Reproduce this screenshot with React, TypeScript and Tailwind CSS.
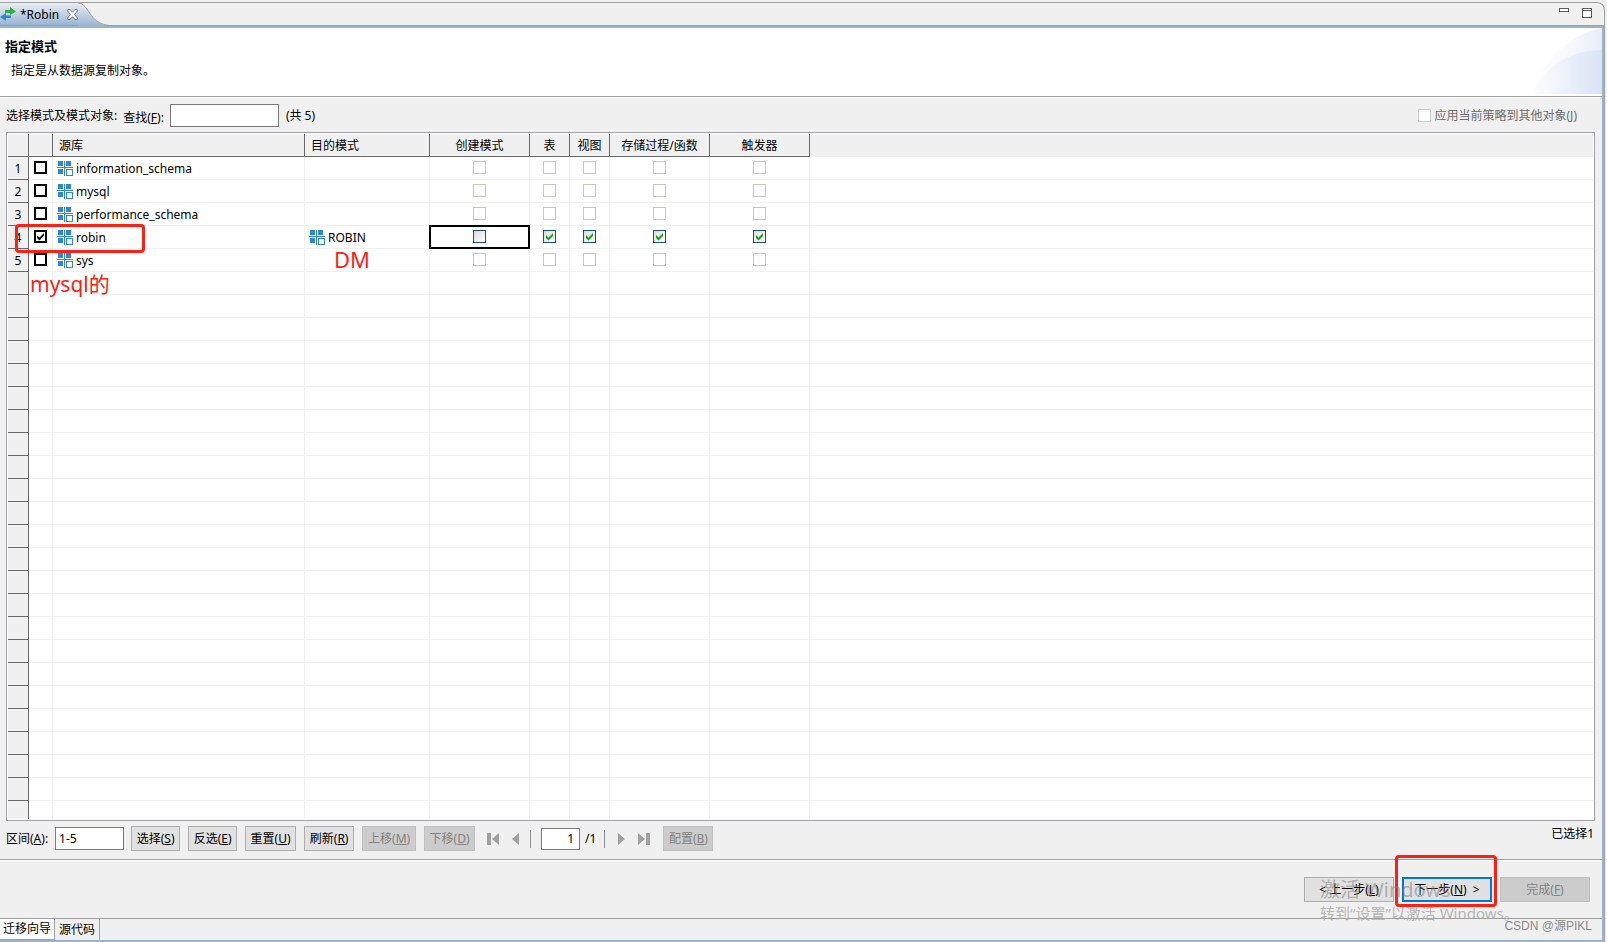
import { useState, type ReactNode } from "react";

type SchemaRow = {
  name: string;
  target?: string;
};

const schemas: SchemaRow[] = [
  { name: "information_schema" },
  { name: "mysql" },
  { name: "performance_schema" },
  { name: "robin", target: "ROBIN" },
  { name: "sys" },
];

const optionColumns = ["创建模式", "表", "视图", "存储过程/函数", "触发器"];
const emptyRows = Array.from({ length: 24 }, (_, i) => i);

function TransferIcon() {
  return (
    <svg width="16" height="14" viewBox="0 0 16 14" aria-hidden="true">
      <path d="M5 3h5V0l6 4.500L10 8V6H5z" fill="#2fae43" />
      <path d="M11 8.500H6V6L0 10l6 4v-3h5z" fill="#2f86d6" />
    </svg>
  );
}

function CloseIcon() {
  return (
    <svg width="11" height="11" viewBox="0 0 11 11" aria-hidden="true">
      <path
        d="M1 .5h2l2.500 2.700L8 .5h2l.5 1.500-3 3.500 3 3.500L10 10.500H8L5.500 7.800 3 10.500H1L.5 9l3-3.500-3-3.500z"
        fill="#fff"
        stroke="#6b6b6b"
      />
    </svg>
  );
}

function SchemaIcon() {
  return (
    <svg className="shrink-0" width="16" height="16" viewBox="0 0 16 16" shapeRendering="crispEdges" aria-hidden="true">
      <g fill="#2f86d6">
        <rect x="1" y="0" width="5" height="5" />
        <rect x="9" y="0" width="5" height="5" />
        <rect x="1" y="8" width="5" height="5" />
        <rect x="7" y="0" width="1" height="15" />
        <rect x="0" y="6" width="16" height="1" />
        <path d="M9 8h7v7H9zM10 9v5h5V9z" fillRule="evenodd" />
      </g>
    </svg>
  );
}

function RowCheck({ label, initial }: { label: string; initial: boolean }) {
  const [checked, setChecked] = useState(initial);
  return (
    <span className="mx-auto grid size-[13px]">
      <input
        type="checkbox"
        aria-label={label}
        checked={checked}
        onChange={() => setChecked(!checked)}
        className="size-[13px] appearance-none border-2 border-black bg-white [grid-area:1/1]"
      />
      {checked && (
        <svg className="pointer-events-none [grid-area:1/1]" width="13" height="13" viewBox="0 0 13 13" aria-hidden="true">
          <path d="M3 5.500v2.500l2.500 2.500L10 5.500V3L5.500 7.500z" fill="#000" />
        </svg>
      )}
    </span>
  );
}

function OptionCheck({ label, enabled, initial }: { label: string; enabled: boolean; initial: boolean }) {
  const [checked, setChecked] = useState(initial);
  return (
    <span className="mx-auto grid size-[13px]">
      <input
        type="checkbox"
        aria-label={label}
        checked={checked}
        disabled={!enabled}
        onChange={() => setChecked(!checked)}
        className="size-[13px] appearance-none border border-[#1c5180] bg-linear-to-br from-[#dcdcd7] to-white [grid-area:1/1] disabled:border-[#cac8bb] disabled:bg-white disabled:bg-none"
      />
      {checked && (
        <svg className="pointer-events-none [grid-area:1/1]" width="13" height="13" viewBox="0 0 13 13" aria-hidden="true">
          <path d="M3 5v3l2.500 2.500L10 6V3L5.500 7.500z" fill="#21a121" />
        </svg>
      )}
    </span>
  );
}

function ToolButton({ children, width, disabled }: { children: ReactNode; width: string; disabled?: boolean }) {
  return (
    <button
      type="button"
      disabled={disabled}
      className={`h-[25px] border border-[#adadad] bg-[#e1e1e1] whitespace-nowrap disabled:border-[#bfbfbf] disabled:bg-[#cccccc] disabled:text-[#838383] ${width}`}
    >
      {children}
    </button>
  );
}

function Rule() {
  return <div className="h-[2px] shrink-0 border-t border-[#a0a0a0] bg-white" />;
}

export default function App() {
  return (
    <div className="flex h-screen flex-col bg-[#f0f0f0] pt-[2px] pr-[2px] font-['Noto_Sans','Noto_Sans_CJK_SC',sans-serif] text-xs leading-4 text-black">
      <div className="flex min-h-0 flex-1 flex-col rounded-tr-lg border-t border-r border-[#a0a0a0]">
        <div className="flex h-[23px] shrink-0 items-stretch justify-between border-b border-[#a0a0a0]">
          <div className="flex">
            <div className="flex items-center bg-linear-to-b from-[#e8eef5] to-[#99b4d1]">
              <TransferIcon />
              <span className="ml-1 w-[47px] pt-px">*Robin</span>
              <button type="button" aria-label="关闭">
                <CloseIcon />
              </button>
            </div>
            <svg width="32" height="23" viewBox="0 0 32 23" aria-hidden="true">
              <defs>
                <linearGradient id="tabFill" x1="0" y1="0" x2="0" y2="1">
                  <stop offset="0" stopColor="#e8eef5" />
                  <stop offset="1" stopColor="#99b4d1" />
                </linearGradient>
              </defs>
              <path d="M0 0C12 1 10 20 31 23H0z" fill="url(#tabFill)" />
              <path d="M0 0C12 1 10 20 31 22.500" fill="none" stroke="#a0a0a0" />
            </svg>
          </div>
          <div className="flex items-start gap-[13px] pt-[5px] pr-3">
            <button type="button" aria-label="最小化">
              <svg width="10" height="4" viewBox="0 0 10 4" shapeRendering="crispEdges" aria-hidden="true">
                <path d="M0 0h10v4H0z" fill="#5a5a5a" />
                <path d="M1 1h8v2H1z" fill="#fff" />
              </svg>
            </button>
            <button type="button" aria-label="最大化">
              <svg width="10" height="10" viewBox="0 0 10 10" shapeRendering="crispEdges" aria-hidden="true">
                <path d="M0 0h10v10H0z" fill="#5a5a5a" />
                <path d="M1 1h8v1H1zM1 3h8v6H1z" fill="#fff" />
              </svg>
            </button>
          </div>
        </div>

        <div className="flex min-h-0 flex-1 flex-col border-t-2 border-r-2 border-b-2 border-[#99b4d1]">
          <header className="flex h-[68px] shrink-0 justify-between bg-white">
            <div className="pt-[10px] pl-[5px]">
              <h1 className="text-[13px] leading-4 font-bold">指定模式</h1>
              <p className="mt-[9px] pl-[6px]">指定是从数据源复制对象。</p>
            </div>
            <svg width="74" height="66" viewBox="0 0 74 66" aria-hidden="true">
              <defs>
                <linearGradient id="swooshBack" x1="0" y1="0" x2="1" y2="0">
                  <stop offset="0" stopColor="#ffffff" />
                  <stop offset="1" stopColor="#e6edf9" />
                </linearGradient>
                <linearGradient id="swooshFront" x1="0" y1="0" x2="1" y2="0">
                  <stop offset="0" stopColor="#ffffff" />
                  <stop offset="1" stopColor="#d9e3f6" />
                </linearGradient>
              </defs>
              <path d="M2 66C18 30 42 6 74 0V66z" fill="url(#swooshBack)" opacity="0.700" />
              <path d="M24 66C34 34 50 4 74 0V66z" fill="url(#swooshBack)" opacity="0.800" />
              <path d="M2 66C18 38 42 22 74 22V66z" fill="url(#swooshFront)" />
            </svg>
          </header>
          <Rule />

          <div className="flex h-[34px] shrink-0 items-center justify-between pt-px pr-[25px] pl-[6px]">
            <div className="flex items-center">
              <span className="pt-px">选择模式及模式对象:</span>
              <label htmlFor="find" className="ml-[6px] pt-[5px]">
                查找(<u>F</u>):
              </label>
              <input id="find" className="ml-[6px] h-[23px] w-[109px] border border-[#7a7a7a] bg-white px-1" />
              <span className="ml-[7px] pt-px">(共 5)</span>
            </div>
            <label className="flex items-center gap-1 text-[#6d6d6d]">
              <input type="checkbox" disabled className="size-[13px] appearance-none border border-[#cccccc] bg-white" />
              <span className="pt-px">
                应用当前策略到其他对象(<u>J</u>)
              </span>
            </label>
          </div>

          <div className="relative mr-[7px] ml-[6px] flex min-h-0 flex-1 flex-col border border-[#a0a0a8] bg-white p-px">
            <div className="min-h-0 flex-1 overflow-hidden">
              <table className="w-full table-fixed border-separate border-spacing-0">
                <colgroup>
                  <col className="w-[21px]" />
                  <col className="w-6" />
                  <col className="w-[252px]" />
                  <col className="w-[125px]" />
                  <col className="w-[100px]" />
                  <col className="w-10" />
                  <col className="w-10" />
                  <col className="w-[100px]" />
                  <col className="w-[100px]" />
                  <col />
                </colgroup>
                <thead>
                  <tr className="h-[23px] bg-[#f0f0f0]">
                    <th className="border-r border-b border-[#696969] p-0" />
                    <th className="border-r border-b border-[#696969] p-0" />
                    <th className="border-r border-b border-[#696969] p-0 pt-[2px] pl-[6px] text-left font-normal">源库</th>
                    <th className="border-r border-b border-[#696969] p-0 pt-[2px] pl-[6px] text-left font-normal">目的模式</th>
                    {optionColumns.map((name) => (
                      <th key={name} className="border-r border-b border-[#696969] p-0 pt-[2px] font-normal whitespace-nowrap">
                        {name}
                      </th>
                    ))}
                    <th className="p-0" />
                  </tr>
                </thead>
                <tbody>
                  {schemas.map((row, index) => (
                    <tr key={row.name} className="h-[23px]">
                      <td className="border-r border-b border-[#696969] bg-[#f0f0f0] p-0 pt-[2px] text-center">{index + 1}</td>
                      <td className="border-r border-b border-[#f0f0f0] p-0 pb-px">
                        <RowCheck label={row.name} initial={!!row.target} />
                      </td>
                      <td className="border-r border-b border-[#f0f0f0] p-0 pt-[2px] pl-1">
                        <span className="flex items-center gap-[3px]">
                          <SchemaIcon />
                          {row.name}
                        </span>
                      </td>
                      <td className="border-r border-b border-[#f0f0f0] p-0 pt-[2px] pl-1">
                        {row.target && (
                          <span className="flex items-center gap-[3px]">
                            <SchemaIcon />
                            {row.target}
                          </span>
                        )}
                      </td>
                      {optionColumns.map((name, column) => (
                        <td key={name} className="relative border-r border-b border-[#f0f0f0] p-0 pb-px">
                          <OptionCheck
                            label={`${row.name} ${name}`}
                            enabled={!!row.target}
                            initial={!!row.target && column > 0}
                          />
                          {row.target && column === 0 && (
                            <span className="pointer-events-none absolute -top-px -right-px -bottom-px -left-px border-2 border-black" />
                          )}
                        </td>
                      ))}
                      <td className="border-b border-[#f0f0f0] p-0" />
                    </tr>
                  ))}
                  {emptyRows.map((row) => (
                    <tr key={row} className="h-[23px]">
                      <td className="border-r border-b border-[#696969] bg-[#f0f0f0] p-0" />
                      <td className="border-r border-b border-[#f0f0f0] p-0" />
                      <td className="border-r border-b border-[#f0f0f0] p-0" />
                      <td className="border-r border-b border-[#f0f0f0] p-0" />
                      {optionColumns.map((name) => (
                        <td key={name} className="border-r border-b border-[#f0f0f0] p-0" />
                      ))}
                      <td className="border-b border-[#f0f0f0] p-0" />
                    </tr>
                  ))}
                </tbody>
              </table>
            </div>
            <div className="pointer-events-none absolute top-[91px] left-2 h-[29px] w-[130px] rounded-[4px] border-3 border-[#fd2015]" />
            <div className="pointer-events-none absolute top-[137px] left-[23px] text-[21px] leading-7 text-[#fd2015]">mysql的</div>
            <div className="pointer-events-none absolute top-[112px] left-[327px] text-[22px] leading-7 text-[#fd2015]">DM</div>
          </div>

          <div className="flex h-[38px] shrink-0 items-start justify-between pt-[5px] pr-2 pl-[6px]">
            <div className="flex items-center">
              <label htmlFor="range">
                区间(<u>A</u>):
              </label>
              <input
                id="range"
                defaultValue="1-5"
                className="mr-[7px] ml-[7px] h-[23px] w-[69px] border border-[#7a7a7a] bg-white px-[3px]"
              />
              <div className="flex gap-2">
                <ToolButton width="w-[49px]">
                  选择(<u>S</u>)
                </ToolButton>
                <ToolButton width="w-[49px]">
                  反选(<u>E</u>)
                </ToolButton>
                <ToolButton width="w-[51px]">
                  重置(<u>U</u>)
                </ToolButton>
                <ToolButton width="w-[50px]">
                  刷新(<u>R</u>)
                </ToolButton>
                <ToolButton width="w-[54px]" disabled>
                  上移(<u>M</u>)
                </ToolButton>
                <ToolButton width="w-[51px]" disabled>
                  下移(<u>D</u>)
                </ToolButton>
              </div>
              <button type="button" aria-label="首页" className="ml-3">
                <svg width="12" height="12" viewBox="0 0 12 12" aria-hidden="true">
                  <path d="M0 0h4v12H0zM12 0v12L5 6z" fill="#a0a0a0" />
                </svg>
              </button>
              <button type="button" aria-label="前一页" className="ml-[13px]">
                <svg width="7" height="12" viewBox="0 0 7 12" aria-hidden="true">
                  <path d="M7 0v12L0 6z" fill="#a0a0a0" />
                </svg>
              </button>
              <span className="ml-[11px] h-[18px] w-px bg-[#8c8c8c]" />
              <input
                aria-label="页码"
                defaultValue="1"
                className="ml-[10px] h-[22px] w-[39px] border border-[#7a7a7a] bg-white px-[5px] text-right"
              />
              <span className="ml-[5px]">/1</span>
              <span className="ml-2 h-[18px] w-px bg-[#8c8c8c]" />
              <button type="button" aria-label="后一页" className="ml-[13px]">
                <svg width="7" height="12" viewBox="0 0 7 12" aria-hidden="true">
                  <path d="M0 0v12l7-6z" fill="#a0a0a0" />
                </svg>
              </button>
              <button type="button" aria-label="末页" className="mr-[13px] ml-[13px]">
                <svg width="12" height="12" viewBox="0 0 12 12" aria-hidden="true">
                  <path d="M8 0h4v12H8zM0 0v12l7-6z" fill="#a0a0a0" />
                </svg>
              </button>
              <ToolButton width="w-[50px]" disabled>
                配置(<u>B</u>)
              </ToolButton>
            </div>
            <span>已选择1</span>
          </div>
          <Rule />

          <footer className="relative flex h-[57px] shrink-0 items-center justify-end gap-2 pr-3">
            <button type="button" className="h-[25px] w-[90px] border border-[#adadad] bg-[#e1e1e1]">
              &lt; 上一步(<u>L</u>)
            </button>
            <span className="relative flex">
              <button type="button" className="h-[25px] w-[90px] border-2 border-[#0078d7] bg-[#e1e1e1]">
                下一步(<u>N</u>)&nbsp; &gt;
              </button>
              <span className="pointer-events-none absolute -top-[22px] -right-[5px] -bottom-[5px] -left-[7px] rounded-[4px] border-3 border-[#fd2015]" />
            </span>
            <button
              type="button"
              disabled
              className="h-[25px] w-[90px] border border-[#bfbfbf] bg-[#cccccc] text-[#838383]"
            >
              完成(<u>F</u>)
            </button>
            <div className="pointer-events-none absolute top-[15px] right-[89px] w-[193px] whitespace-nowrap text-[#808080]/55">
              <div className="text-xl leading-7">激活 Windows</div>
              <div className="text-[15px] leading-[18px]">转到“设置”以激活 Windows。</div>
            </div>
          </footer>

          <nav className="relative flex h-[22px] shrink-0 border-t border-[#a0a0a0]">
            <button type="button" className="border-r border-b border-[#a0a0a0] bg-white px-[3px]">
              迁移向导
            </button>
            <button type="button" className="border-r border-[#a0a0a0] px-1">
              源代码
            </button>
            <span className="pointer-events-none absolute -top-px right-[10px] font-['Liberation_Sans','Noto_Sans_CJK_SC',sans-serif] text-xs leading-4 text-[#8a8a8a]">
              CSDN @源PIKL
            </span>
          </nav>
        </div>
      </div>
    </div>
  );
}
